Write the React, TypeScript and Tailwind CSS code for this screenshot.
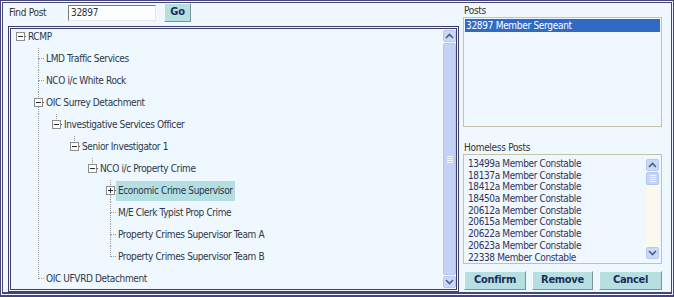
import React from "react";

const FONT = "font-['DejaVu_Sans_Condensed','DejaVu_Sans',sans-serif]";

type TNode = {
  label: string;
  level: number;
  anc: boolean[];
  box?: "minus" | "plus";
  last: boolean;
  root?: boolean;
  selected?: boolean;
};

const A5 = [false, true, false, false, false];

const nodes: TNode[] = [
  { label: "RCMP", level: 0, anc: [], box: "minus", last: true, root: true },
  { label: "LMD Traffic Services", level: 1, anc: [false], last: false },
  { label: "NCO i/c White Rock", level: 1, anc: [false], last: false },
  { label: "OIC Surrey Detachment", level: 1, anc: [false], box: "minus", last: false },
  { label: "Investigative Services Officer", level: 2, anc: [false, true], box: "minus", last: true },
  { label: "Senior Investigator 1", level: 3, anc: [false, true, false], box: "minus", last: true },
  { label: "NCO i/c Property Crime", level: 4, anc: [false, true, false, false], box: "minus", last: true },
  { label: "Economic Crime Supervisor", level: 5, anc: A5, box: "plus", last: false, selected: true },
  { label: "M/E Clerk Typist Prop Crime", level: 5, anc: A5, last: false },
  { label: "Property Crimes Supervisor Team A", level: 5, anc: A5, last: false },
  { label: "Property Crimes Supervisor Team B", level: 5, anc: A5, last: true },
  { label: "OIC UFVRD Detachment", level: 1, anc: [false], last: true },
];

const homeless = [
  "13499a Member Constable",
  "18137a Member Constable",
  "18412a Member Constable",
  "18450a Member Constable",
  "20612a Member Constable",
  "20615a Member Constable",
  "20622a Member Constable",
  "20623a Member Constable",
  "22338 Member Constable",
];

const LINE = "#9a9a9a";

function AncCell({ on }: { on: boolean }) {
  return (
    <svg width="18" height="22" className="shrink-0 block">
      {on && <line x1="9.5" y1="0" x2="9.5" y2="22" stroke={LINE} strokeDasharray="1 1" />}
    </svg>
  );
}

function OwnCell({ n }: { n: TNode }) {
  return (
    <svg width="15" height="22" className="shrink-0 block">
      {!n.root && (
        <line x1="9.5" y1="0" x2="9.5" y2={n.box ? 6 : 11} stroke={LINE} strokeDasharray="1 1" />
      )}
      {!n.last && (
        <line x1="9.5" y1={n.box ? 15 : 11} x2="9.5" y2="22" stroke={LINE} strokeDasharray="1 1" />
      )}
      {n.box ? (
        <>
          <rect x="5.5" y="6.5" width="8" height="8" fill="#ffffff" stroke="#8c8c8c" />
          <line x1="7" y1="10.5" x2="12" y2="10.5" stroke="#2a2a2a" />
          {n.box === "plus" && <line x1="9.5" y1="8" x2="9.5" y2="13" stroke="#2a2a2a" />}
          <line x1="14" y1="10.5" x2="15" y2="10.5" stroke="#555" />
        </>
      ) : (
        <line x1="10" y1="10.5" x2="15" y2="10.5" stroke={LINE} strokeDasharray="1 1" />
      )}
    </svg>
  );
}

function Chevron({ up }: { up: boolean }) {
  return (
    <svg width="9" height="6" className="block">
      <path
        d={up ? "M1 5 L4.5 1.5 L8 5" : "M1 1 L4.5 4.5 L8 1"}
        fill="none"
        stroke="#4a5d86"
        strokeWidth="1.6"
      />
    </svg>
  );
}

function ScrollBtn({ up }: { up: boolean }) {
  return (
    <div className="h-[12px] flex items-center justify-center rounded-[2px] bg-[#c9d8f8] border border-[#b6c9ef] shrink-0">
      <Chevron up={up} />
    </div>
  );
}

function Grip() {
  return (
    <div className="flex flex-col gap-[1px] items-center">
      <div className="w-[6px] h-[1px] bg-[#eef3fe]" />
      <div className="w-[6px] h-[1px] bg-[#eef3fe]" />
      <div className="w-[6px] h-[1px] bg-[#eef3fe]" />
      <div className="w-[6px] h-[1px] bg-[#eef3fe]" />
    </div>
  );
}

function TreeRow({ n }: { n: TNode }) {
  return (
    <div className="flex items-center h-[22px]">
      {n.anc.map((a, i) => (
        <AncCell key={i} on={a} />
      ))}
      <OwnCell n={n} />
      <span
        className={
          "px-[2px] whitespace-nowrap text-[10px] tracking-[-0.38px] leading-[14px] text-[#2e3648] " +
          (n.selected ? "bg-[#b3dfe3] py-[3px]" : "")
        }
      >
        {n.label}
      </span>
    </div>
  );
}

function Btn({ children, w }: { children: React.ReactNode; w: string }) {
  return (
    <div
      className={
        "h-[19px] flex items-center justify-center bg-[#b5dfe0] border border-t-[#f2fbfb] border-l-[#f2fbfb] border-b-[#7d9494] border-r-[#7d9494] text-[11px] tracking-[-0.3px] font-bold text-[#1c2d5c] " +
        w
      }
    >
      {children}
    </div>
  );
}

export default function App() {
  return (
    <div className={"w-[674px] h-[297px] bg-[#f0f8ff] " + FONT}>
      <div className="w-full h-full border-[3px] border-b-[5px] border-double border-[#45457a] flex">
        {/* left column */}
        <div className="flex flex-col pl-[5px] gap-[4px]">
          <div className="h-[19px] flex items-center">
            <span className="text-[10px] tracking-[-0.3px] text-[#333] ml-[1px] w-[59px]">Find Post</span>
            <div className="w-[88px] h-[16px] border border-t-[#7a7a7a] border-l-[#7a7a7a] border-b-[#e6e6e6] border-r-[#e6e6e6] bg-[#fbfdff] flex items-center px-[2px] text-[10px] tracking-[-0.3px] text-[#333]">
              32897
            </div>
            <Btn w="w-[27px] ml-[8px]">Go</Btn>
          </div>
          <div className="w-[451px] h-[266px] border-[3px] border-double border-[#3d3d6c] flex overflow-hidden">
            <div className="flex-1 overflow-hidden">
              <div className="-mt-[3px]">
                {nodes.map((n, i) => (
                  <TreeRow key={i} n={n} />
                ))}
              </div>
            </div>
            <div className="w-[13px] flex flex-col py-[1px]">
              <ScrollBtn up />
              <div className="flex-1 mt-[1px] mb-[1px] rounded-[2px] bg-[#c3d3f6] border border-[#b3c6ee] flex items-center justify-center">
                <Grip />
              </div>
              <ScrollBtn up={false} />
            </div>
          </div>
        </div>
        {/* right column */}
        <div className="flex flex-col w-[199px] ml-[4px]">
          <div className="h-[13px] text-[10px] tracking-[-0.3px] leading-[13px] text-[#333] pl-[1px] mt-[1px]">Posts</div>
          <div className="h-[110px] border border-[#c6c1a9] p-[1px]">
            <div className="h-[13px] bg-[#316ac5] text-white text-[10px] tracking-[-0.3px] leading-[13px] px-[1px] whitespace-nowrap">
              32897 Member Sergeant
            </div>
          </div>
          <div className="h-[13px] text-[10px] tracking-[-0.3px] leading-[13px] text-[#333] pl-[1px] mt-[14px]">Homeless Posts</div>
          <div className="h-[110px] border border-[#c6c1a9] flex">
            <div className="flex-1 pl-[4px] pt-[3px] overflow-hidden">
              {homeless.map((h) => (
                <div key={h} className="h-[11.7px] leading-[11.7px] text-[10px] tracking-[-0.38px] text-[#33335a] whitespace-nowrap">
                  {h}
                </div>
              ))}
            </div>
            <div className="w-[13px] mr-[2px] my-[4px] flex flex-col bg-[#fbf8ed]">
              <ScrollBtn up />
              <div className="h-[13px] mt-[1px] rounded-[2px] bg-[#c5d5f7] border border-[#b3c6ee] flex items-center justify-center">
                <Grip />
              </div>
              <div className="flex-1" />
              <ScrollBtn up={false} />
            </div>
          </div>
          <div className="flex mt-[7px] gap-[6px] pl-[1px]">
            <Btn w="w-[62px]">Confirm</Btn>
            <Btn w="w-[61px]">Remove</Btn>
            <Btn w="w-[63px]">Cancel</Btn>
          </div>
        </div>
      </div>
    </div>
  );
}
